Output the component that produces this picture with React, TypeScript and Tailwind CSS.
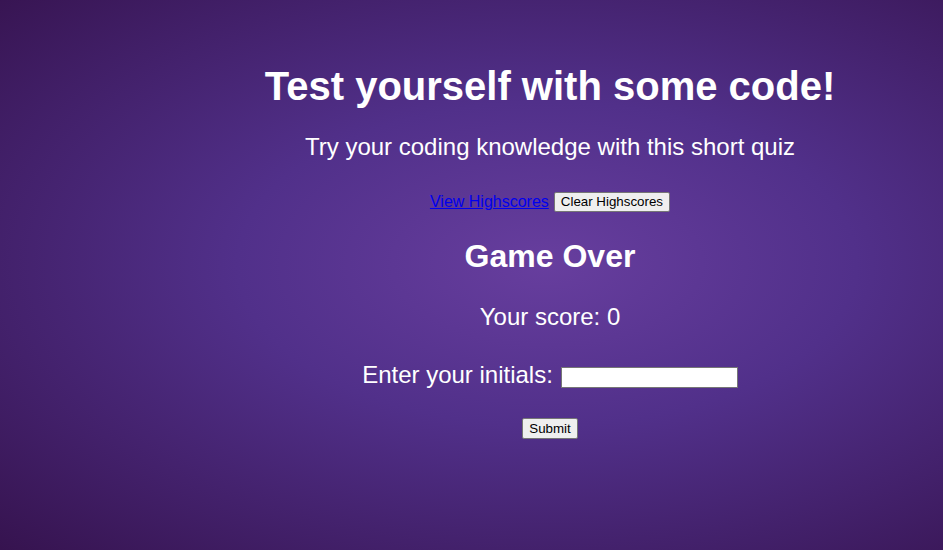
export default function App() {
  return (
    <main
      className="min-h-[550px] w-full text-white bg-[radial-gradient(ellipse_at_58%_48%,#673e9e_0%,#51308a_40%,#36134f_100%)] pl-[157px]"
      style={{ fontFamily: '"Liberation Sans", Arial, sans-serif' }}
    >
      <div className="flex flex-col items-center pt-[62px]">
        <h1 className="text-[40px] font-bold leading-[48px]">Test yourself with some code!</h1>
        <p className="mt-[23px] text-[24px] leading-[28px]">Try your coding knowledge with this short quiz</p>

        <div className="mt-[31px] flex items-center gap-[5px]">
          <a href="#" className="text-[16px] text-[#0000ee] underline leading-[18px]">View Highscores</a>
          <button className="text-[13.33px] text-black bg-[#efefef] border border-[#767676] rounded-[2px] px-[6px] h-[20px] leading-[16px]">
            Clear Highscores
          </button>
        </div>

        <h2 className="mt-[26px] text-[32px] font-bold leading-[37px]">Game Over</h2>
        <p className="mt-[28px] text-[24px] leading-[28px]">Your score: 0</p>

        <div className="mt-[30px] flex items-center gap-[8px]">
          <label className="text-[24px] leading-[28px]">Enter your initials:</label>
          <input className="w-[177px] h-[21px] bg-white border border-[#767676] mt-[4px] text-black text-[13px]" />
        </div>

        <button className="mt-[29px] text-[13.33px] text-black bg-[#efefef] border border-[#767676] rounded-[2px] px-[6px] h-[21px] leading-[16px]">
          Submit
        </button>
      </div>
    </main>
  );
}
